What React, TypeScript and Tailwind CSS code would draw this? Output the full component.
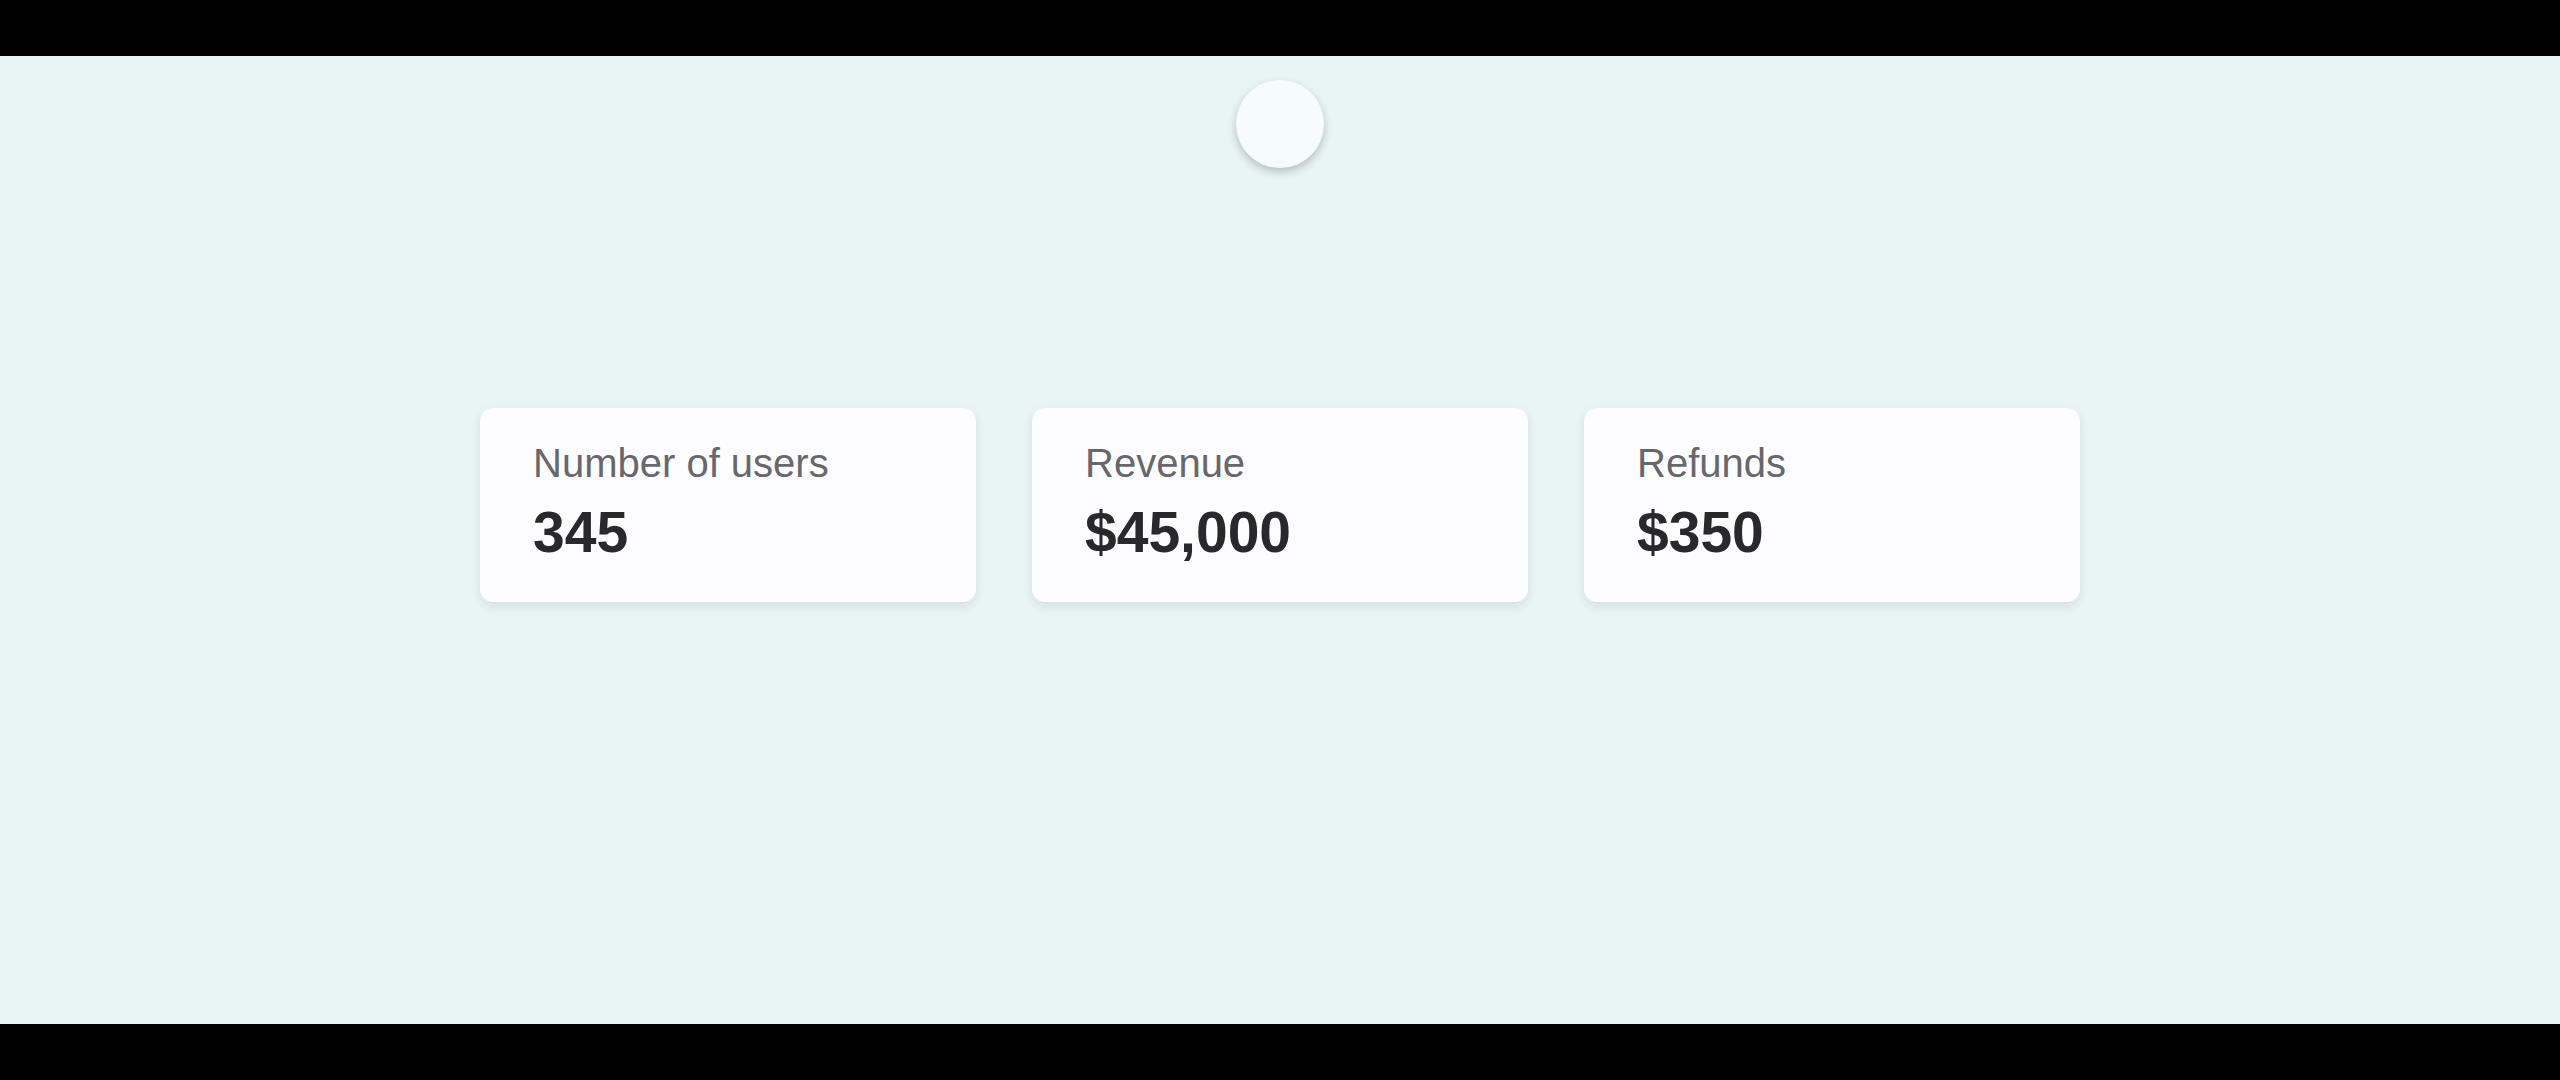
import React from 'react';

interface StatCardProps {
  label: string;
  value: string;
}

function StatCard({ label, value }: StatCardProps) {
  return (
    <div className="w-[496px] h-[194px] bg-[#fdfdff] rounded-[13px] shadow-[0_4px_12px_rgba(0,0,0,0.09)] px-[53px] pt-[32px]">
      <div className="text-[40px] leading-[46px] text-[#67676e]">{label}</div>
      <div className="mt-[14px] text-[57px] leading-[64px] font-bold text-[#29292b]">{value}</div>
    </div>
  );
}

export default function App() {
  const stats = [
    { label: 'Number of users', value: '345' },
    { label: 'Revenue', value: '$45,000' },
    { label: 'Refunds', value: '$350' },
  ];

  return (
    <div
      className="h-[1080px] w-full flex flex-col bg-black"
      style={{ fontFamily: '"Liberation Sans", Arial, sans-serif' }}
    >
      <div className="h-[56px] shrink-0 bg-black" />
      <main className="flex-1 bg-[#e9f4f4] flex flex-col items-center pt-[24px]">
        <div className="w-[88px] h-[88px] rounded-full bg-[#f6fbfd] shadow-[0_4px_10px_rgba(0,0,0,0.22)]" />
        <div className="mt-[240px] flex gap-[56px]">
          {stats.map((s) => (
            <StatCard key={s.label} label={s.label} value={s.value} />
          ))}
        </div>
      </main>
      <div className="h-[56px] shrink-0 bg-black" />
    </div>
  );
}
